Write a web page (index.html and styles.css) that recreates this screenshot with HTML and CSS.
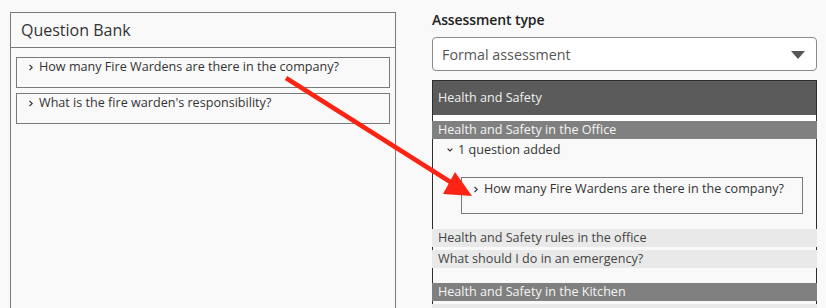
FILE: index.html
```html
<!DOCTYPE html>
<html lang="en">

<head>
  <meta charset="UTF-8">
  <meta name="viewport" content="width=device-width, initial-scale=1.0">
  <title>Assessment Builder</title>
  <link rel="stylesheet" href="styles.css">
</head>

<body>
  <div class="page">
    <div class="bank">
      <div class="bank-header">Question Bank</div>
      <div class="bank-list">
        <div class="question">
          <svg class="chev" width="4" height="7" viewBox="0 0 4 7"><path d="M0.5 0.8 L3.2 3.5 L0.5 6.2" fill="none" stroke="#333" stroke-width="1.2"/></svg>
          <span>How many Fire Wardens are there in the company?</span>
        </div>
        <div class="question">
          <svg class="chev" width="4" height="7" viewBox="0 0 4 7"><path d="M0.5 0.8 L3.2 3.5 L0.5 6.2" fill="none" stroke="#333" stroke-width="1.2"/></svg>
          <span>What is the fire warden's responsibility?</span>
        </div>
      </div>
    </div>

    <div class="builder">
      <label class="field-label">Assessment type</label>
      <div class="select">
        <span>Formal assessment</span>
        <svg width="14" height="8" viewBox="0 0 14 8"><polygon points="0,0 14,0 7,8" fill="#555"/></svg>
      </div>

      <div class="sections">
        <div class="section-title">Health and Safety</div>
        <div class="topic topic-open">Health and Safety in the Office</div>
        <div class="added">
          <svg class="chev-down" width="6" height="4" viewBox="0 0 6 4"><path d="M0.6 0.6 L3 3 L5.4 0.6" fill="none" stroke="#333" stroke-width="1.2"/></svg>
          <span>1 question added</span>
        </div>
        <div class="question nested">
          <svg class="chev" width="4" height="7" viewBox="0 0 4 7"><path d="M0.5 0.8 L3.2 3.5 L0.5 6.2" fill="none" stroke="#333" stroke-width="1.2"/></svg>
          <span>How many Fire Wardens are there in the company?</span>
        </div>
        <div class="topic topic-light first-light">Health and Safety rules in the office</div>
        <div class="topic topic-light">What should I do in an emergency?</div>
        <div class="topic topic-open kitchen">Health and Safety in the Kitchen</div>
        <div class="topic topic-light"></div>
      </div>
    </div>
  </div>

  <!-- drag hint arrow, drawn over the page -->
  <svg class="drag-arrow" width="826" height="308" viewBox="0 0 826 308">
    <line x1="286" y1="78" x2="452" y2="183" stroke="#fb2414" stroke-width="4.5" stroke-linecap="butt"/>
    <polygon points="455,172 443,194 472,196" fill="#fb2414"/>
  </svg>
</body>

</html>
```

FILE: styles.css
```css
body {
  margin: 0;
  background-color: #f9f9f9;
  font-family: "Open Sans", "DejaVu Sans", sans-serif;
  color: #333;
  height: 308px;
  overflow: hidden;
  position: relative;
}

.page {
  display: flex;
  align-items: flex-start;
  padding: 10px 0 0 10px;
}

.bank {
  width: 386px;
  min-height: 330px;
  margin-top: 2px;
  border: 1px solid #7a7a7a;
  box-sizing: border-box;
}

.bank-header {
  padding: 6px 10px 6px;
  font-size: 16px;
  line-height: 22px;
  color: #333;
  border-bottom: 1px solid #7a7a7a;
}

.bank-list {
  display: flex;
  flex-direction: column;
  gap: 5px;
  padding: 9px 5px 0 5px;
}

.question {
  display: flex;
  align-items: center;
  align-self: stretch;
  height: 31px;
  box-sizing: border-box;
  padding: 0 0 11px 12px;
  border: 1px solid #7a7a7a;
  font-size: 12.6px;
  line-height: 18px;
  color: #333;
}

.chev {
  margin-right: 6px;
  flex: none;
}

.builder {
  width: 385px;
  margin-left: 36px;
}

.field-label {
  display: block;
  font-size: 14px;
  font-weight: 600;
  line-height: 19px;
  color: #222;
  letter-spacing: -0.1px;
}

.select {
  display: flex;
  align-items: center;
  justify-content: space-between;
  height: 34px;
  box-sizing: border-box;
  margin-top: 8px;
  padding: 0 11px 0 9px;
  background: #fff;
  border: 1px solid #8a8a8a;
  border-radius: 4px;
  font-size: 14.3px;
  color: #555;
}

.select svg {
  margin-top: 2px;
}

.sections {
  margin-top: 9px;
  border: 1px solid #2e2e2e;
  border-bottom: none;
  height: 240px;
}

.section-title {
  height: 34px;
  line-height: 34px;
  padding-left: 5px;
  background: #5b5b5b;
  border-bottom: 6px solid #fff;
  color: #f0f0f0;
  font-size: 12.6px;
}

.topic {
  height: 18px;
  line-height: 18px;
  margin: 0 -1px;
  padding-left: 6px;
  font-size: 12.6px;
}

.topic-open {
  background: #808080;
  color: #f5f5f5;
}

.topic-light {
  background: #e9e9e9;
  color: #444;
  margin-top: 3px;
}

.first-light {
  margin-top: 15px;
}

.kitchen {
  margin-top: 15px;
}

.added {
  display: flex;
  align-items: center;
  padding: 2px 0 0 14px;
  font-size: 12.6px;
  line-height: 18px;
  color: #333;
}

.chev-down {
  margin-right: 5px;
}

.question.nested {
  height: 37px;
  margin: 18px 13px 0 28px;
  padding: 2px 0 15px 12px;
  align-items: flex-start;
}

.question.nested .chev {
  margin-top: 6px;
}

.drag-arrow {
  position: absolute;
  left: 0;
  top: 0;
  pointer-events: none;
}
```
